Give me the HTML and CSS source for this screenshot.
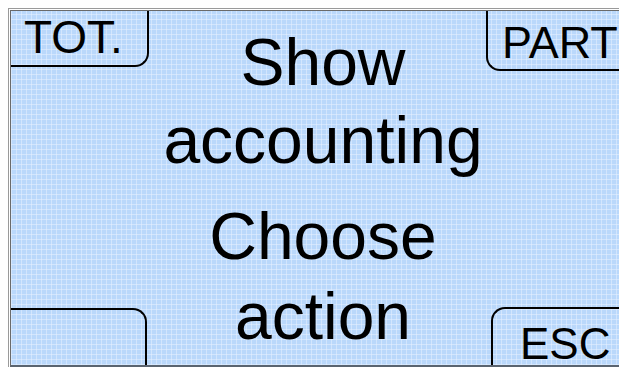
FILE: index.html
```html
<!DOCTYPE html>
<html lang="en">
<head>
  <meta charset="UTF-8">
  <title>Show accounting</title>
  <link rel="stylesheet" href="styles.css">
</head>
<body>

  <div class="frame">
    <div class="screen">
      <div class="tab tab-tl"><span>TOT.</span></div>
      <div class="tab tab-tr"><span>PART</span></div>
      <div class="tab tab-bl"></div>
      <div class="tab tab-br"><span>ESC</span></div>

      <div class="message">
        <p class="title">Show<br>accounting</p>
        <p class="prompt">Choose<br>action</p>
      </div>
    </div>
  </div>

</body>
</html>
```

FILE: styles.css
```css
html, body {
  margin: 0;
  padding: 0;
  background: #fff;
  overflow: hidden;
}
body {
  font-family: "Liberation Sans", Arial, sans-serif;
  color: #000;
  padding: 8px 0 0 8px;
  height: 361px;
}
.frame {
  border-top: 1px solid #9a9a9a;
  border-left: 1px solid #9a9a9a;
  padding: 1px 0 0 1px;
}
.screen {
  position: relative;
  overflow: hidden;
  height: 354px;
  border-top: 1px solid #6a6a6a;
  border-left: 1px solid #6a6a6a;
  border-bottom: 2px solid #5a6470;
  background-color: #bad8fb;
  background-image:
    repeating-linear-gradient(90deg, rgba(230, 240, 255, 0.55) 0 1px, transparent 1px 5px),
    repeating-linear-gradient(0deg, rgba(230, 240, 255, 0.55) 0 1px, transparent 1px 5px);
}

/* soft key tabs in the corners */
.tab {
  position: absolute;
  box-sizing: border-box;
  border: 0 solid #000;
  line-height: 1;
}
.tab span {
  display: block;
  white-space: nowrap;
}
.tab-tl {
  left: -1px;
  top: -1px;
  width: 139px;
  height: 57px;
  border-right-width: 2px;
  border-bottom-width: 2px;
  border-bottom-right-radius: 14px;
  font-size: 46px;
}
.tab-tl span {
  padding: 4px 0 0 14px;
}
.tab-tr {
  left: 475px;
  top: -1px;
  width: 200px;
  height: 61px;
  border-left-width: 2px;
  border-bottom-width: 2px;
  border-bottom-left-radius: 14px;
  font-size: 45px;
}
.tab-tr span {
  padding: 10px 0 0 14px;
}
.tab-bl {
  left: -1px;
  top: 297px;
  width: 137px;
  height: 70px;
  border-top-width: 2px;
  border-right-width: 2px;
  border-top-right-radius: 14px;
}
.tab-br {
  left: 480px;
  top: 296px;
  width: 200px;
  height: 70px;
  border-top-width: 2px;
  border-left-width: 2px;
  border-top-left-radius: 14px;
  font-size: 44px;
}
.tab-br span {
  padding: 13px 0 0 27px;
}

.message {
  display: flex;
  flex-direction: column;
  align-items: center;
  padding: 12px 0 0 16px;
  gap: 17px;
  font-size: 66px;
  text-align: center;
}
.message p {
  margin: 0;
}
.title {
  line-height: 78px;
  margin-left: 6px;
}
.prompt {
  line-height: 80px;
  margin-right: 7px;
}
```
